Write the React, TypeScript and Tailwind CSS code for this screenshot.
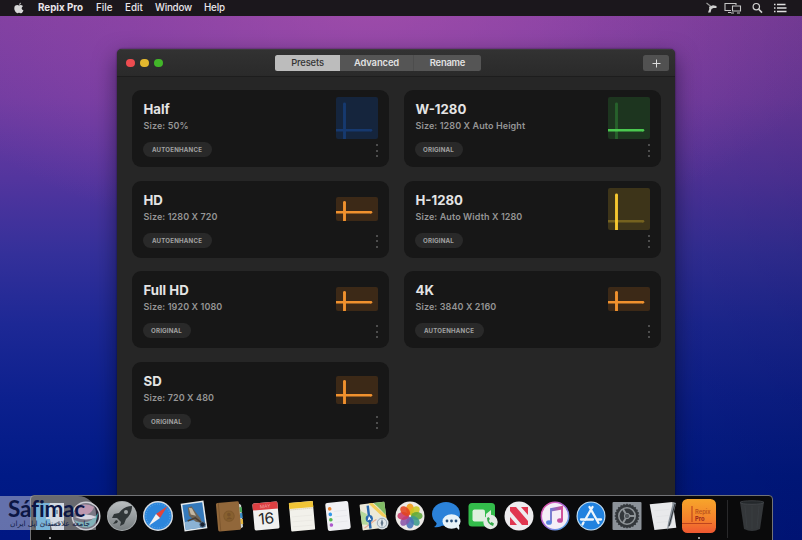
import React from "react";

type Tone = "blue" | "green" | "yellow" | "orange";

interface Preset {
  name: string;
  size: string;
  tag: string;
  tone: Tone;
  h: number;
}

const presets: Preset[] = [
  { name: "Half", size: "Size: 50%", tag: "AUTOENHANCE", tone: "blue", h: 42 },
  { name: "W-1280", size: "Size: 1280 X Auto Height", tag: "ORIGINAL", tone: "green", h: 42 },
  { name: "HD", size: "Size: 1280 X 720", tag: "AUTOENHANCE", tone: "orange", h: 24 },
  { name: "H-1280", size: "Size: Auto Width X 1280", tag: "ORIGINAL", tone: "yellow", h: 42 },
  { name: "Full HD", size: "Size: 1920 X 1080", tag: "ORIGINAL", tone: "orange", h: 24 },
  { name: "4K", size: "Size: 3840 X 2160", tag: "AUTOENHANCE", tone: "orange", h: 24 },
  { name: "SD", size: "Size: 720 X 480", tag: "ORIGINAL", tone: "orange", h: 28 },
];

const tones: Record<Tone, { bg: string; v: string; hz: string }> = {
  blue: { bg: "#15253d", v: "#16396f", hz: "#16396f" },
  green: { bg: "#1d351f", v: "#27612c", hz: "#4bc950" },
  yellow: { bg: "#3d3419", v: "#f6c830", hz: "#75621f" },
  orange: { bg: "#3c2917", v: "#f0912e", hz: "#f0912e" },
};

function Ratio({ tone, h }: { tone: Tone; h: number }) {
  const c = tones[tone];
  const top = h > 40 ? 5.5 : 4;
  const vLine = <path d={`M8.5 ${top + 1.4}V${h}`} stroke={c.v} strokeWidth="2.9" />;
  const vCap = <circle cx="8.5" cy={top + 1.4} r="1.45" fill={c.v} />;
  return (
    <svg width="42" height={h} viewBox={`0 0 42 ${h}`}>
      <rect width="42" height={h} rx="2" fill={c.bg} />
      {tone === "yellow" ? null : vLine}
      {tone === "yellow" ? null : vCap}
      <path d={`M0 ${h - 8.7}H35`} stroke={c.hz} strokeWidth="2.6" />
      <circle cx="35" cy={h - 8.7} r="1.3" fill={c.hz} />
      {tone === "yellow" ? vLine : null}
      {tone === "yellow" ? vCap : null}
    </svg>
  );
}

function Card({ p }: { p: Preset }) {
  return (
    <div className="flex h-[77px] justify-between rounded-[9px] bg-[#171717] pr-[11px] pl-[11px]">
      <div className="flex flex-col items-start">
        <div className="mt-[10px] ml-[1px] h-[19px] text-[13.2px] leading-[19px] font-bold whitespace-nowrap text-[#e4e4e4]">{p.name}</div>
        <div className="ml-[1px] h-[13px] text-[9px] leading-[13px] font-semibold tracking-[0.1px] whitespace-nowrap text-[#959595]">{p.size}</div>
        <div
          className={
            p.tag === "ORIGINAL"
              ? "mt-[10px] flex h-[15px] w-[48px] items-center justify-center rounded-full bg-[#292929] text-[6.2px] font-bold tracking-[0.15px] text-[#a2a2a2]"
              : "mt-[10px] flex h-[15px] w-[69px] items-center justify-center rounded-full bg-[#292929] text-[6.1px] font-bold tracking-[0.22px] text-[#a2a2a2]"
          }
        >
          {p.tag}
        </div>
      </div>
      <div className="flex flex-col items-end">
        <div className="mt-[7px] flex h-[42px] items-center">
          <Ratio tone={p.tone} h={p.h} />
        </div>
        <div className="mt-[5px] flex h-[13px] w-[3px] flex-col items-center justify-between">
          <span className="size-[2px] rounded-full bg-[#606060]" />
          <span className="size-[2px] rounded-full bg-[#606060]" />
          <span className="size-[2px] rounded-full bg-[#606060]" />
        </div>
      </div>
    </div>
  );
}

function DockCell({ children, running }: { children: React.ReactNode; running?: boolean }) {
  return (
    <div className="flex w-[36.06px] shrink-0 flex-col items-center">
      <svg width="36" height="40" viewBox="-18 -20 36 40" className="overflow-visible">
        {children}
      </svg>
      {running ? <span className="mt-[0.5px] size-[2.5px] rounded-full bg-[#c9c9c9]" /> : null}
    </div>
  );
}

const petals = ["#f39a12", "#c9c722", "#5fa83a", "#3c9a8c", "#4673b8", "#8a55a8", "#c9386a", "#e2431f"];
const teeth = Array.from({ length: 24 }, (_, i) => i * 15);

function Dock() {
  return (
    <div className="absolute top-[495px] left-[30px] flex h-[46px] w-[742.5px] rounded-t-[4px] border border-[#727376] bg-[#0a0a0b] pl-[1px]">
      <DockCell running>
        <rect x="-14" y="-13" width="14" height="27" fill="#2c9fdf" />
        <path d="M0-13H14V14H2Q0 8 0 3H-4Q-3-6 0-13Z" fill="#dfe9f0" />
        <path d="M-8-6V-2M7-6V-2M-9 7Q0 12 9 6" stroke="#173a5c" strokeWidth="1.4" fill="none" />
      </DockCell>
      <DockCell>
        <circle r="14.5" fill="#d3d3d8" />
        <circle r="13" fill="#2b2636" />
        <path d="M-12-3Q-6-16 8-9Q4 3-12-3Z" fill="#b3668f" />
        <path d="M-12 4Q3 11 12-3Q10 16-7 10Z" fill="#3d9b9e" />
        <path d="M-11 1Q0-4 11 1Q0 6-11 1Z" fill="#e5e0ec" />
      </DockCell>
      <DockCell>
        <defs>
          <linearGradient id="silver" x1="0" y1="0" x2="0" y2="1">
            <stop stopColor="#b9bdbf" />
            <stop offset="1" stopColor="#777d80" />
          </linearGradient>
        </defs>
        <circle r="15" fill="#a7abad" />
        <circle r="14" fill="url(#silver)" />
        <path d="M10-10Q2-10-3-3L-8-2L-10 2L-5 2L-1 6L-2 10L2 8L4 3Q10-2 10-10Z" fill="#303638" />
        <path d="M-6 4L-9 8L-5 7L-4 5Z" fill="#303638" />
        <circle cx="4" cy="-4" r="2" fill="#9da2a4" />
      </DockCell>
      <DockCell>
        <circle r="15" fill="#d8dde2" />
        <circle r="13.6" fill="#2c86dc" />
        <circle r="12" fill="none" stroke="#5fa8e8" strokeWidth="1.2" strokeDasharray="0.7 1.7" />
        <path d="M9.5-10L2 2L-2-2Z" fill="#e34439" />
        <path d="M-9.5 10L2 2L-2-2Z" fill="#f0f1f3" />
      </DockCell>
      <DockCell>
        <g transform="rotate(-8)">
          <rect x="-11.5" y="-14" width="23" height="28" fill="#e7ebed" />
          <rect x="-10" y="-12.5" width="20" height="25" fill="#3479bb" />
          <path d="M-10 5Q0 2 10 8V12.5H-10Z" fill="#8bb2d4" />
          <path d="M-5-9L-1-10L2-4L6 3L7 8L1 6L-5-1Z" fill="#6d6558" />
          <path d="M-4-9L-1-8L2 0L-3-2Z" fill="#c4b8a2" />
          <path d="M-7 4L1 2L8 9" fill="none" stroke="#4a3d31" strokeWidth="1.5" />
        </g>
        <circle cx="8.5" cy="8.5" r="2.6" fill="#192434" stroke="#48627c" />
      </DockCell>
      <DockCell>
        <g transform="rotate(-5)">
          <path d="M8-13L12-10V12L8 14Z" fill="#cfd5d1" />
          <path d="M10-8H12.5V-3H10Z" fill="#4eac5d" />
          <path d="M10-2H12.5V3H10Z" fill="#3a8dca" />
          <path d="M10 4H12.5V9H10Z" fill="#e4b640" />
          <rect x="-13" y="-14" width="23" height="28.5" rx="1.5" fill="#91673a" />
          <path d="M-10.5-14V14" stroke="#7d572f" />
          <circle cx="-1" cy="0" r="5.2" fill="#87602f" stroke="#7e582d" />
          <circle cx="-1" cy="-1.5" r="1.8" fill="#76512b" />
          <path d="M-4 3.2Q-1-.8 2 3.2Z" fill="#76512b" />
        </g>
      </DockCell>
      <DockCell>
        <g transform="rotate(-5)">
          <rect x="-12.5" y="-13.5" width="25" height="27" rx="1.5" fill="#f0f0ef" />
          <path d="M-12.5-6.5V-12Q-12.5-13.5-11-13.5H11Q12.5-13.5 12.5-12V-6.5Z" fill="#dc3f42" />
          <text x="0" y="-8" textAnchor="middle" fill="#f0a09e" fontSize="4.8" fontFamily="Inter, sans-serif">MAY</text>
          <text x="0" y="8" textAnchor="middle" fill="#262626" fontSize="15.5" fontFamily="Inter, sans-serif" letterSpacing="-0.3">16</text>
        </g>
      </DockCell>
      <DockCell>
        <g transform="rotate(-5)">
          <rect x="-12" y="-14" width="24" height="28.5" rx="1" fill="#f2f1eb" />
          <path d="M-12-14H12V-8H-12Z" fill="#f0c435" />
          <path d="M-12-7H12" stroke="#b9ad85" strokeDasharray="1 1" strokeWidth="0.6" />
          <path d="M-10 0H10M-10 5H10M-10 10H10" stroke="#e3e2dd" strokeWidth="0.5" />
        </g>
      </DockCell>
      <DockCell>
        <g transform="rotate(-6)">
          <rect x="-11.5" y="-14" width="23" height="28" rx="2" fill="#f1f1f4" />
          <circle cx="-7.5" cy="-8" r="1.8" fill="#e98435" />
          <circle cx="-7.5" cy="-2.4" r="1.8" fill="#3297e9" />
          <circle cx="-7.5" cy="3" r="1.8" fill="#57b750" />
          <circle cx="-7.5" cy="8.3" r="1.8" fill="#ae59cd" />
          <path d="M-3.5-5H9M-3.5 0.5H9M-3.5 6H9" stroke="#dedee2" strokeWidth="0.5" />
        </g>
      </DockCell>
      <DockCell>
        <g transform="rotate(-7)">
          <rect x="-13" y="-13" width="25" height="26" rx="1" fill="#ece9d9" />
          <path d="M1-13H12V1Q6-8 1-13Z" fill="#80bc65" />
          <path d="M0-13L12 1V6L-4-13Z" fill="#f4ce5b" />
          <path d="M-13-7L-7-3V8L-13 7Z" fill="#b5d99b" />
          <path d="M-11 11L1 4L11 7" fill="none" stroke="#e7ab95" strokeWidth="1.2" />
          <path d="M-5-11V12" stroke="#2869af" strokeWidth="2.4" />
          <circle cx="-5" cy="2" r="3.6" fill="#2869af" />
          <path d="M-5-.5L-3 4L-5 3L-7 4Z" fill="#fff" />
        </g>
        <circle cx="8" cy="7" r="6.5" fill="#dfe6e9" />
        <circle cx="8" cy="7" r="4.7" fill="none" stroke="#8a9aa7" strokeWidth="0.8" />
        <path d="M8 3L9.4 7L8 11L6.6 7Z" fill="#60768a" />
      </DockCell>
      <DockCell>
        <circle r="14.5" fill="#ece9e6" />
        {petals.map((fill, i) => (
          <ellipse key={fill} cy="-6.8" rx="3.9" ry="5.8" fill={fill} opacity="0.88" transform={`rotate(${i * 45})`} />
        ))}
      </DockCell>
      <DockCell>
        <ellipse cx="-1" cy="-2" rx="14" ry="12" fill="#2b82d9" />
        <path d="M-11 4Q-9 9-13 11Q-7 12-3 8Z" fill="#2b82d9" />
        <ellipse cx="4.5" cy="5.5" rx="9" ry="7.3" fill="#e8f3f8" />
        <path d="M8 10L12 14Q13 10 11 8Z" fill="#e8f3f8" />
        <circle cx="0" cy="5" r="1.4" fill="#284f78" />
        <circle cx="4.5" cy="5" r="1.4" fill="#284f78" />
        <circle cx="9" cy="5" r="1.4" fill="#284f78" />
      </DockCell>
      <DockCell>
        <rect x="-14.5" y="-13" width="26.5" height="23.5" rx="3.5" fill="#33bc4b" />
        <rect x="-10.5" y="-6.5" width="12.5" height="12" rx="2" fill="#e0f0df" />
        <path d="M3-2L8-6V3L3 1Z" fill="#e0f0df" />
        <circle cx="7.5" cy="6" r="7.2" fill="#e3ebe4" />
        <path d="M4 2Q4 8 10 10L11 7.5L8.5 6L7.5 7Q6 6 6 4L7 3L5.5 1Z" fill="#34a94a" />
      </DockCell>
      <DockCell>
        <circle r="14.5" fill="#eeecef" />
        <path d="M-9-9H-3L9 5V9H3L-9-5Z" fill="#e03650" />
        <path d="M2-9H9V-1ZM-9 1V9H-2Z" fill="#e03650" />
      </DockCell>
      <DockCell>
        <defs>
          <linearGradient id="music" x1="0" x2="1" y1="0" y2="1">
            <stop stopColor="#ee4fa0" />
            <stop offset="0.5" stopColor="#a66bde" />
            <stop offset="1" stopColor="#43b7ed" />
          </linearGradient>
          <linearGradient id="note" gradientUnits="userSpaceOnUse" x1="-7" x2="8" y1="0" y2="0">
            <stop stopColor="#5a86e0" />
            <stop offset="1" stopColor="#d8488f" />
          </linearGradient>
        </defs>
        <circle r="13.7" fill="#f4eef7" stroke="url(#music)" strokeWidth="1.5" />
        <path d="M-4 6V-7L7-9V4M-4-5.5L7-7.5" stroke="url(#note)" strokeWidth="1.9" fill="none" />
        <ellipse cx="-6" cy="6.5" rx="2.9" ry="2.3" fill="#5a86e0" />
        <ellipse cx="5" cy="4.5" rx="2.9" ry="2.3" fill="#c14d9f" />
      </DockCell>
      <DockCell>
        <circle r="14.5" fill="#c6dff2" />
        <circle r="13.4" fill="#2182df" />
        <path d="M-1.5-9L7.5 7M1.5-9L-6 4M-10 3.5H2M6 3.5H10M-7.5 6.5L-8.5 8.5" stroke="#edf5fb" strokeWidth="2.3" strokeLinecap="round" />
      </DockCell>
      <DockCell>
        <rect x="-14.5" y="-14" width="29" height="28" rx="1" fill="#8c9299" />
        <circle r="11.5" fill="#34383c" />
        {teeth.map((a) => (
          <path key={a} d="M0-12.3V-9" stroke="#34383c" strokeWidth="1.6" transform={`rotate(${a})`} />
        ))}
        <circle r="8.2" fill="none" stroke="#8f9498" strokeWidth="1.6" />
        <path d="M0 0L-4-7M0 0H8M0 0L-4 7" stroke="#8f9498" strokeWidth="2" />
        <circle r="2.7" fill="#51565b" stroke="#8f9498" />
      </DockCell>
      <DockCell>
        <g transform="rotate(-6)">
          <path d="M-12-13H11L12 13H-10Z" fill="#e8e9eb" />
          <path d="M-8-6H7M-7 0H6M-7 6H5" stroke="#dcdee0" strokeWidth="0.5" />
        </g>
        <path d="M10-14L13-13L8 8L4 14L5 7Z" fill="#89929b" />
        <path d="M12-12L6 10" stroke="#31373d" />
      </DockCell>
      <DockCell running>
        <defs>
          <linearGradient id="repix" x1="0" x2="0" y1="0" y2="1">
            <stop stopColor="#f7a52b" />
            <stop offset="0.6" stopColor="#f4812c" />
            <stop offset="1" stopColor="#ef5731" />
          </linearGradient>
        </defs>
        <rect x="-17" y="-17" width="34" height="34" rx="5.5" fill="url(#repix)" />
        <path d="M-7-10V6M-17 7.5H13" stroke="#bd441e" strokeWidth="1.1" />
        <text x="-4" y="-2.2" fill="#bc521d" fontSize="5.8" fontWeight="600" fontFamily="Inter, sans-serif">Repix</text>
        <text x="-4" y="4.6" fill="#9b281b" fontSize="5.8" fontWeight="700" fontFamily="Inter, sans-serif">Pro</text>
      </DockCell>
      <div className="mt-[4px] ml-[10px] h-[38px] w-px bg-[#29292b]" />
      <div className="ml-[6px] flex">
        <DockCell>
          <path d="M-12-14H12L8 13Q0 17-8 13Z" fill="#34373a" />
          <ellipse cy="-13.5" rx="12" ry="1.8" fill="#24282b" stroke="#474b4f" strokeWidth="0.7" />
          <path d="M-7-10L-5 12M0-10V13M7-10L5 12" stroke="#3b3f42" strokeWidth="0.8" />
        </DockCell>
      </div>
    </div>
  );
}

function Watermark() {
  return (
    <div className="absolute top-[496px] left-0 flex h-[34px] w-[96px] flex-col rounded-tr-[18px] bg-[#c8cad4]/50 pt-[3px] pl-[8px]">
      <div className="h-[20px] font-['Lato','Open_Sans',sans-serif] text-[22.5px] leading-[20px] font-bold tracking-[-0.2px] whitespace-nowrap text-[#0c1644]">Sáfimac</div>
      <div dir="rtl" className="h-[9px] w-[82px] text-right font-['DejaVu_Sans',sans-serif] text-[7.3px] leading-[9px] whitespace-nowrap text-[#101b45]">
        جامعه علاقمندان اپل ایران
      </div>
    </div>
  );
}

function MenuBar() {
  return (
    <header className="flex h-[16px] items-center bg-[#1b171c] pr-[15px] pl-[14px] text-[9.8px] leading-[16px] font-medium text-[#e9e6ea]">
      <svg width="10" height="12" viewBox="0 0 20 24" fill="#d8d8d8">
        <path d="M14 1Q14 5 10 6Q10 2 14 1ZM10 7Q14 5 18 8Q12 13 19 17Q16 24 12 22Q10 21 8 22Q4 24 1 16Q-1 6 7 6Z" />
      </svg>
      <span className="ml-[14px] w-[58px] font-bold whitespace-nowrap">Repix Pro</span>
      <span className="w-[29px]">File</span>
      <span className="w-[30px]">Edit</span>
      <span className="w-[49px] tracking-[-0.2px]">Window</span>
      <span className="tracking-[-0.2px]">Help</span>
      <div className="ml-auto flex items-center">
        <svg width="12" height="12" viewBox="0 0 12 12">
          <path d="M1.5 1L6 4.5" stroke="#999" strokeWidth="1.1" />
          <path d="M4 4.8L8 3.2L11.5 4V6H8.5L6.5 7L5.5 10.5H3L4.3 7Z" fill="#d0d0d0" />
        </svg>
        <svg className="ml-[7px]" width="18" height="12" viewBox="0 0 18 12" fill="none" stroke="#c4c4c4" strokeWidth="1.1">
          <path d="M7 8.5H1V1.5H12V3M4 10.5H7" />
          <path d="M8.5 4H16.5V9H8.5ZM7 11H10M13 11H16" />
        </svg>
        <svg className="ml-[10px]" width="11" height="12" viewBox="0 0 11 12" fill="none" stroke="#d2d2d2">
          <circle cx="4.3" cy="4.7" r="3.2" strokeWidth="1.2" />
          <path d="M6.7 7.2L10 10.6" strokeWidth="1.6" />
        </svg>
        <svg className="ml-[11px]" width="13" height="10" viewBox="0 0 13 10" stroke="#dedede" strokeWidth="1.5">
          <path d="M0 1.5H1.5M3 1.5H11.5M0 5H1.5M3 5H12.5M0 8.5H1.5M3 8.5H12.5" />
        </svg>
      </div>
    </header>
  );
}

export default function App() {
  return (
    <div className="relative h-[540px] w-[802px] overflow-hidden bg-[radial-gradient(ellipse_480px_250px_at_370px_0px,rgba(180,84,176,0.6),rgba(165,75,172,0.35)_50%,rgba(150,70,170,0)),linear-gradient(100deg,rgba(0,0,0,0)_60%,rgba(0,0,30,0.16)),linear-gradient(180deg,#8040a0_0%,#703ca1_18%,#53359e_33%,#34309a_47%,#1d2895_60%,#0c208e_74%,#001a86_88%,#001783_100%)] font-['Inter','Liberation_Sans',sans-serif]">
      <MenuBar />
      <main className="absolute top-[49px] left-[117px] flex h-[491px] w-[558px] flex-col rounded-t-[5px] bg-[#262626] shadow-[0_8px_22px_rgba(0,0,20,0.5),0_0_2px_rgba(0,0,0,0.6)]">
        <div className="flex h-[28px] shrink-0 items-center rounded-t-[5px] border-t border-b border-t-[#3c3c3c] border-b-[#1d1d1d] bg-linear-to-b from-[#323232] to-[#2a2a2a] pr-[6px] pl-[9px]">
          <div className="flex gap-[5.5px]">
            <span className="size-[8.5px] rounded-full bg-[#ed4c50]" />
            <span className="size-[8.5px] rounded-full bg-[#e3b82e]" />
            <span className="size-[8.5px] rounded-full bg-[#42b629]" />
          </div>
          <div className="ml-[112.5px] flex h-[15.5px] w-[206px] overflow-hidden rounded-[2.5px] bg-[#555] text-[9.4px] leading-[16px] font-semibold text-[#e2e2e2]">
            <div className="w-[65px] bg-[#bcbcbc] text-center font-medium tracking-[-0.15px] text-[#333]">Presets</div>
            <div className="w-[74px] border-r border-[#4d4d4d] text-center tracking-[-0.1px]">Advanced</div>
            <div className="flex-1 text-center tracking-[-0.2px]">Rename</div>
          </div>
          <div className="ml-auto flex h-[16px] w-[26px] items-center justify-center rounded-[2.5px] bg-[#515151]">
            <svg width="9" height="9" viewBox="0 0 9 9" stroke="#ddd" strokeWidth="1">
              <path d="M4.5 0.5V8.5M0.5 4.5H8.5" />
            </svg>
          </div>
        </div>
        <div className="grid grid-cols-[257.5px_257.5px] gap-x-[14.5px] gap-y-[13.7px] pt-[13px] pl-[14.5px]">
          {presets.map((p) => (
            <Card key={p.name} p={p} />
          ))}
        </div>
      </main>
      <Dock />
      <Watermark />
    </div>
  );
}
